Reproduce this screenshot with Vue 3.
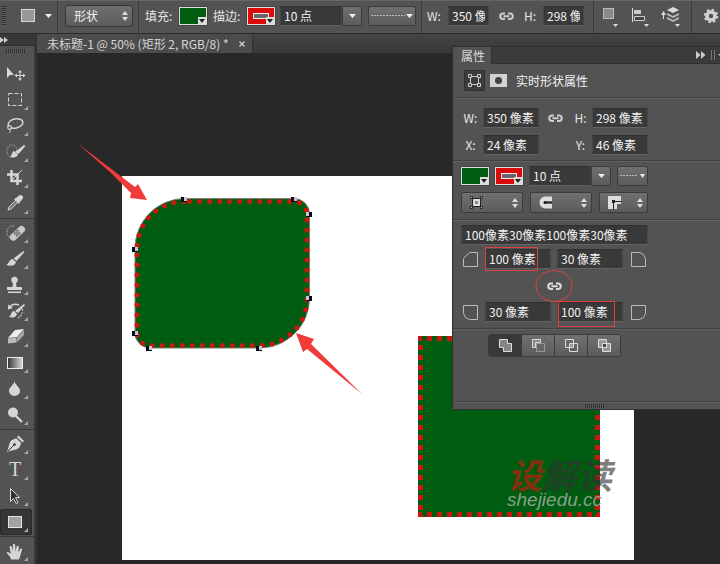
<script setup>
import { ref } from 'vue'

const light = '#d6d6d6'

const toolGroups = [
  [
    { name: '移动工具', plain: true, art: `<path d="M7 6v11l3-3 4 0z" fill="${light}"/><path d="M20 10v9M15.500 14.500h9" stroke="${light}" stroke-width="1"/><path d="M20 9l-2 2.500h4zM20 20l-2-2.500h4zM14.500 14.500l2.500-2v4zM25.500 14.500l-2.500-2v4z" fill="${light}"/>` },
    { name: '矩形选框工具', art: `<rect x="8.500" y="6.500" width="13" height="12" fill="none" stroke="${light}" stroke-dasharray="4 2"/>` },
    { name: '套索工具', art: `<ellipse cx="15.500" cy="10.500" rx="7.500" ry="4.500" transform="rotate(-12 15.500 10.500)" fill="none" stroke="${light}" stroke-width="1.500"/><circle cx="9.500" cy="14.500" r="1.800" fill="#535353" stroke="${light}" stroke-width="1.200"/><path d="M10 16c1 2 0 3-1 4" fill="none" stroke="${light}"/>` },
    { name: '快速选择工具', art: `<ellipse cx="12" cy="12" rx="5" ry="6" fill="none" stroke="${light}" stroke-dasharray="1 1.500"/><path d="M24 6l1.500 1-7 8-3.500-2z" fill="${light}"/><path d="M14 12l4 3.500c-1 3-4 3.500-8 2.500 2-1 1.500-5 4-6z" fill="${light}"/>` },
    { name: '裁剪工具', art: `<path d="M11.500 5v11H22M7 9.500h10.500V20" fill="none" stroke="${light}" stroke-width="2.500"/><path d="M12 15l10-10" stroke="${light}"/>` },
    { name: '吸管工具', art: `<path d="M16 9l-7 7-1 3 3-1 7-7z" fill="#777" stroke="${light}"/><path d="M14 8l2-1 3-2.500q2-1 3.500.5t0 3L20 11l-1 2z" fill="${light}"/>` },
  ],
  [
    { name: '污点修复画笔', art: `<path d="M14 6c-4-1-7 2-7 6s2 6 4 6" fill="none" stroke="${light}" stroke-dasharray="1 1.500"/><rect x="8" y="10" width="18" height="7" rx="3" transform="rotate(-43 17 13)" fill="#c9c9c9"/><rect x="14" y="10" width="6" height="6" transform="rotate(-43 17 13)" fill="#999"/><path d="M17 10.500v.1M17 13v.1M17 15.500v.1M14.500 13v.1M19.500 13v.1" stroke="#444" stroke-width="1.200" stroke-linecap="round"/>` },
    { name: '画笔工具', art: `<path d="M23.500 5l1 1-8 9-3-2.500z" fill="${light}"/><path d="M12.500 13l3.500 3c-1 4-5 4.500-10 3 3-1 3-5.500 6.500-6z" fill="${light}"/>` },
    { name: '仿制图章工具', art: `<circle cx="14.500" cy="8" r="3.200" fill="${light}"/><path d="M13 10h3l.5 5H22v3H7v-3h5.500zM8 19.500h13V21H8z" fill="${light}"/>` },
    { name: '历史记录画笔', art: `<path d="M24 6l1 1-7 8-3-2zM14 13l3 3c-1 3.500-4 4-8 3 2-1 2-5.500 5-6z" fill="${light}"/><path d="M10 9c2-3 6-3 9-2" fill="none" stroke="${light}" stroke-width="1.500"/><path d="M8 6.500v5l5-1.500z" fill="${light}"/><path d="M22.500 11c0 4-1 7-4.500 9" fill="none" stroke="${light}" stroke-width="1.200" stroke-dasharray="1.500 1.500"/>` },
    { name: '橡皮擦工具', art: `<path d="M15 6l9-1-7 8-9 1z" fill="#eee"/><path d="M8 14.500l8.500-1v5l-8.500 1z" fill="#bbb"/><path d="M17 13.500L24 6v5l-7 7.500z" fill="#a5a5a5"/>` },
    { name: '渐变工具', art: `<defs><linearGradient id="tg"><stop stop-color="#333"/><stop offset="1" stop-color="#ddd"/></linearGradient></defs><rect x="7.500" y="7.500" width="15" height="11" fill="url(#tg)" stroke="#eee"/>` },
    { name: '模糊工具', art: `<path d="M14.500 5c.5 4 5.500 6 5.500 10a5.500 5 0 0 1-11 0c0-4 5-6 5.500-10z" fill="${light}"/>` },
    { name: '减淡工具', art: `<circle cx="13" cy="10.500" r="5" fill="${light}"/><path d="M16 14l6 6" stroke="${light}" stroke-width="2.200"/>` },
  ],
  [
    { name: '钢笔工具', art: `<path d="M17 6l1.500-1.500 5.500 5.500-1.500 1.500z" fill="${light}"/><path d="M16.300 7.200l5 5L19 17c-4 2.500-8 2-12 4 2-4 1.500-8 4-11.500z" fill="${light}"/><path d="M8 20l6-6" stroke="#333"/><circle cx="14.500" cy="13.500" r="1.300" fill="#333"/>` },
    { name: '横排文字工具', art: `<text x="15" y="19" text-anchor="middle" font-family="Liberation Serif, serif" font-size="20" fill="${light}">T</text>` },
    { name: '路径选择工具', art: `<path d="M10.500 5.500v13l3-3 2.500 5 2-1-2.500-5h4z" fill="#333" stroke="${light}"/>` },
    { name: '矩形工具', active: true, art: `<rect x="8.500" y="7.500" width="13" height="11" fill="#a2a2a2" stroke="#e4e4e4"/>` },
  ],
  [
    { name: '抓手工具', art: `<path d="M11 21.500c-.5-3-2.500-4-4-6.200-.5-1.200.8-1.800 1.800-.9l2 1.600-1.200-7c0-1.300 2-1.500 2.300-.2l1 4.700V7c0-1.300 2.300-1.300 2.300 0l.3 6.500 1.200-5c.3-1.200 2.300-.9 2.200.3l-.6 5.700 2-3.600c.6-1 2.200-.4 1.800.8-1.400 4-1.800 7-3.200 9.800z" fill="${light}"/>` },
  ],
]

const fields = ref({
  width: '350 像素', height: '298 像素', x: '24 像素', y: '46 像素', stroke: '10 点',
  corners: '100像素30像素100像素30像素', tl: '100 像素', tr: '30 像素', bl: '30 像素', br: '100 像素',
})

const operations = [
  { name: '合并形状', art: '<path d="M.5.5h8v4h4v8h-8v-4h-4z" fill="#858585" stroke="#ddd"/>' },
  { name: '减去顶层形状', art: '<path d="M4.500 4.500h8v8h-8z" fill="#666" stroke="#999"/><path d="M.5.500h8v3h-5v5h-3z" fill="#888" stroke="#ddd"/>' },
  { name: '与形状区域相交', art: '<path d="M.5.500h8v8h-8zM4.500 4.500h8v8h-8z" fill="none" stroke="#ddd"/><path d="M5 5h3v3H5z" fill="#999"/>' },
  { name: '排除重叠形状', art: '<path d="M.5.500h8v8h-8zM4.500 4.500h8v8h-8z" fill="#999" stroke="#ddd"/><path d="M5 5h3v3H5z" fill="#444"/>' },
]
const activeOperation = ref(0)

const anchors = [[184, 199], [294, 199], [309, 214], [309, 298], [259, 348], [149, 348], [135, 333], [135, 249]]
</script>

<template>
  <div class="app">
    <header class="options">
      <div class="group preset">
        <i class="grip-v"></i>
        <button class="flat" aria-label="工具预设">
          <svg width="32" height="14"><rect x=".5" y=".5" width="13" height="12" fill="#989898" stroke="#d8d8d8" /><path d="M24 5h7l-3.500 4z" fill="#eee" /></svg>
        </button>
      </div>
      <div class="group mode">
        <div class="picker">
          <select aria-label="工具模式"><option>形状</option><option>路径</option><option>像素</option></select>
          <svg class="updown" width="6" height="10"><path d="M0 4l3-4 3 4zM0 6h6l-3 4z" fill="#ddd" /></svg>
        </div>
      </div>
      <div class="group paint">
        <label class="cap" for="bar-fill">填充:</label>
        <button id="bar-fill" class="swatch fill"><svg width="8" height="7"><path d="M0 0h8v7H0z" fill="#ddd" /><path d="M1 2h6L4 6z" fill="#222" /></svg></button>
        <label class="cap next" for="bar-stroke">描边:</label>
        <button id="bar-stroke" class="swatch stroke"><i></i><svg width="8" height="7"><path d="M0 0h8v7H0z" fill="#ddd" /><path d="M1 2h6L4 6z" fill="#222" /></svg></button>
        <div class="combo">
          <input v-model="fields.stroke" aria-label="描边宽度"><button aria-label="选择描边宽度"><svg width="7" height="4"><path d="M0 0h7L3.500 4z" fill="#eee" /></svg></button>
        </div>
        <button class="dash long" aria-label="描边类型"><svg width="42" height="6"><path d="M0 2.500h34" stroke="#bbb" stroke-width="1" stroke-dasharray="2 1" /><path d="M35 1h7l-3.500 4z" fill="#eee" /></svg></button>
      </div>
      <div class="group size">
        <label class="w" for="bar-w">W:</label><input id="bar-w" v-model="fields.width">
        <button class="flat chain" aria-label="链接宽高"><svg width="15" height="9"><path d="M6 7H4a2.700 2.700 0 0 1 0-5.500h2M9 7h2a2.700 2.700 0 0 0 0-5.500H9M4.500 4.200h6" fill="none" stroke="#ccc" stroke-width="2" /></svg></button>
        <label class="h" for="bar-h">H:</label><input id="bar-h" v-model="fields.height">
      </div>
      <div class="group arrange">
        <button class="flat" aria-label="路径操作"><svg width="24" height="20"><rect x="1.500" y="2.500" width="10" height="10" fill="#8a8a8a" stroke="#bbb" /><path d="M11 18h5l-2.500 3z" fill="#ddd" /></svg></button>
        <button class="flat" aria-label="路径对齐方式"><svg width="24" height="20"><path d="M1.500 2v14" stroke="#ddd" /><path d="M3 4h7v4H3z" fill="#ccc" /><path d="M3.500 10.500h10v4h-10z" fill="#444" stroke="#ccc" /><path d="M13 18h5l-2.500 3z" fill="#ddd" /></svg></button>
        <button class="flat" aria-label="路径排列方式"><svg width="24" height="20"><path d="M3.500 13V7" stroke="#ddd" /><path d="M1 9l2.500-4L6 9z" fill="#ddd" /><path d="M13 1l6 3-6 3-6-3z" fill="#ddd" /><path d="M7 7l6 3 6-3v2l-6 3-6-3zM7 11l6 3 6-3v2l-6 3-6-3z" fill="#bbb" /><path d="M15 18h5l-2.500 3z" fill="#ddd" /></svg></button>
      </div>
      <div class="group more">
        <button class="flat" aria-label="设置"><svg width="16" height="16" viewBox="-8 -8 16 16"><circle r="4" fill="none" stroke="#d2d2d2" stroke-width="3.500" /><circle r="6" fill="none" stroke="#d2d2d2" stroke-width="2.500" stroke-dasharray="2.350 2.350" /></svg></button>
      </div>
    </header>

    <div class="workspace">
      <nav class="toolbox" aria-label="工具">
        <button class="collapse" aria-label="展开面板"><svg width="8" height="6"><path d="M0 0l4 3-4 3zM4 0l4 3-4 3z" fill="#ccc" /></svg></button>
        <div class="handle"><i class="grip-h"></i></div>
        <div v-for="(group, g) in toolGroups" :key="g" class="tool-group">
          <button v-for="tool in group" :key="tool.name" class="tool" :class="{ active: tool.active }" :aria-label="tool.name">
            <svg width="32" height="26"><g v-html="tool.art" /><path v-if="!tool.plain" d="M28 19v4h-4z" fill="#aaa" /></svg>
          </button>
        </div>
      </nav>

      <main class="document">
        <div class="tabs">
          <div class="tab"><span>未标题-1 @ 50% (矩形 2, RGB/8) *</span><button class="flat" aria-label="关闭"><svg width="6" height="6"><path d="M.5.500l5 5M5.500.500l-5 5" stroke="#ccc" stroke-width="1.300" /></svg></button></div>
        </div>
        <div class="canvas">
          <svg class="scene" width="600" height="510" viewBox="37 54 600 510">
            <rect x="122" y="176" width="512" height="384" fill="#fff" />
            <rect x="418" y="336" width="182" height="181" fill="#005c10" />
            <path d="M420.500 339v178M597.500 339v178" stroke="#cb1710" stroke-width="5" stroke-dasharray="5 5" stroke-dashoffset="4" />
            <path d="M418 514.500h182M418 338.500h182" stroke="#cb1710" stroke-width="5" stroke-dasharray="5 5" stroke-dashoffset="1" />
            <path d="M185 198.500h109a15.500 15.500 0 0 1 15.500 15.500v84a50 50 0 0 1-50 50H150a15 15 0 0 1-15-15V248.500a50 50 0 0 1 50-50z" fill="#005c10" stroke="#79877a" />
            <path d="M189.700 201.500H294a13 13 0 0 1 13 13V298a47 47 0 0 1-47 47.500H150a13 13 0 0 1-13-13V249a47.500 47.500 0 0 1 48-47.500z" fill="none" stroke="#cb1710" stroke-width="5" stroke-linecap="round" stroke-dasharray="0 10" />
            <g v-for="([x, y], i) in anchors" :key="i">
              <rect :x="x - 3" :y="y - 2" width="6" height="5" fill="#080810" />
              <rect :x="x > 300 ? x - 3 : x" :y="y - 2" width="3" height="4" fill="#cfc3dc" />
            </g>
            <path d="M77 143L135 187l3-3 9 16-17-2 1-5-21-21z" fill="#f03b3b" />
            <path d="M296 333l18 6-3 5 51 50-55-45-4 3z" fill="#f03b3b" />
            <g class="watermark">
              <text x="507" y="489" class="mark"><tspan fill="#a5270e" fill-opacity=".8">设</tspan><tspan fill="#333" fill-opacity=".65">解读</tspan></text>
              <text x="507" y="506" class="site">shejiedu.cc</text>
            </g>
          </svg>
        </div>
      </main>

      <aside class="panel">
        <div class="panel-head"><h2>属性</h2><button class="flat" aria-label="折叠面板"><svg width="24" height="10"><path d="M0 1l4.500 4L0 9zM5 1l4.500 4L5 9z" fill="#ccc" /><path d="M15.500 0v10M18.500 0v10" stroke="#777" /><path d="M22 4h2v2z" fill="#bbb" /></svg></button></div>
        <div class="title">
          <button class="kind" aria-label="形状属性"><svg width="13" height="13"><path d="M2.500 2.500h8v8h-8z" fill="none" stroke="#ccc" /><path d="M.5.500h3v3h-3zM9.500.500h3v3h-3zM.5 9.500h3v3h-3zM9.500 9.500h3v3h-3z" fill="#444" stroke="#ccc" /></svg></button>
          <button class="flat" aria-label="蒙版"><svg width="17" height="13"><path d="M0 0h17v13H0z" fill="#d2d2d2" /><circle cx="8.500" cy="6.500" r="3.500" fill="#444" /></svg></button>
          <span>实时形状属性</span>
        </div>
        <section class="geometry">
          <label for="p-w">W:</label><input id="p-w" v-model="fields.width">
          <button class="flat" aria-label="链接宽高"><svg width="15" height="9"><path d="M6 7H4a2.700 2.700 0 0 1 0-5.500h2M9 7h2a2.700 2.700 0 0 0 0-5.500H9M4.500 4.200h6" fill="none" stroke="#ccc" stroke-width="2" /></svg></button>
          <label for="p-h">H:</label><input id="p-h" v-model="fields.height">
          <label for="p-x">X:</label><input id="p-x" v-model="fields.x">
          <span></span>
          <label for="p-y">Y:</label><input id="p-y" v-model="fields.y">
        </section>
        <section class="appearance">
          <div class="line">
            <button class="swatch fill" aria-label="填充颜色"><svg width="8" height="7"><path d="M0 0h8v7H0z" fill="#ddd" /><path d="M1 2h6L4 6z" fill="#222" /></svg></button>
            <button class="swatch stroke" aria-label="描边颜色"><i></i><svg width="8" height="7"><path d="M0 0h8v7H0z" fill="#ddd" /><path d="M1 2h6L4 6z" fill="#222" /></svg></button>
            <div class="combo"><input v-model="fields.stroke" aria-label="描边宽度"><button aria-label="选择描边宽度"><svg width="7" height="4"><path d="M0 0h7L3.500 4z" fill="#eee" /></svg></button></div>
            <button class="dash" aria-label="描边类型"><svg width="25" height="6"><path d="M0 2.500h18" stroke="#bbb" stroke-width="1" stroke-dasharray="2 1" /><path d="M20 1h5l-2.500 4z" fill="#eee" /></svg></button>
          </div>
          <div class="line strokes">
            <button class="choice" aria-label="描边对齐"><svg width="13" height="13"><path d="M2.500 2.500h8v8h-8z" fill="#ddd" stroke="#222" /><path d="M5 5h3v3H5z" fill="#888" /><path d="M.5.500h2v2h-2zM10.500.500h2v2h-2zM.5 10.500h2v2h-2zM10.500 10.500h2v2h-2z" fill="#ddd" stroke="#222" /></svg><svg width="6" height="10"><path d="M0 4l3-4 3 4zM0 6h6l-3 4z" fill="#ddd" /></svg></button>
            <button class="choice" aria-label="描边端点"><svg width="13" height="13"><path d="M13 .500H6.500a6 6 0 0 0 0 12H13V8H5V5h8z" fill="#ddd" /><path d="M6 6.500h7" stroke="#222" /><circle cx="6" cy="6.500" r="1.500" fill="#222" /></svg><svg width="6" height="10"><path d="M0 4l3-4 3 4zM0 6h6l-3 4z" fill="#ddd" /></svg></button>
            <button class="choice" aria-label="描边角点"><svg width="13" height="13"><path d="M0 0h13v8H9v5H0z" fill="#ddd" /><path d="M5.500 13V5.500H13" fill="none" stroke="#222" /><path d="M4 4h3v3H4z" fill="#222" /></svg><svg width="6" height="10"><path d="M0 4l3-4 3 4zM0 6h6l-3 4z" fill="#ddd" /></svg></button>
          </div>
        </section>
        <section class="radii">
          <input v-model="fields.corners" class="all" aria-label="圆角半径">
          <label for="r-tl"><svg width="15" height="15"><path d="M.5 14.500v-8l6-6h8v14z" fill="none" stroke="#bbb" /></svg></label>
          <input id="r-tl" v-model="fields.tl"><input id="r-tr" v-model="fields.tr" class="second">
          <label class="after" for="r-tr"><svg width="15" height="15"><path d="M.5.500h8q5 1 6 6v8H.5z" fill="none" stroke="#bbb" /></svg></label>
          <button class="flat link" aria-label="链接圆角"><svg width="15" height="9"><path d="M6 7H4a2.700 2.700 0 0 1 0-5.500h2M9 7h2a2.700 2.700 0 0 0 0-5.500H9M4.500 4.200h6" fill="none" stroke="#ddd" stroke-width="2" /></svg></button>
          <label for="r-bl"><svg width="15" height="15"><path d="M.5.500h14v14h-8q-5-1-6-6z" fill="none" stroke="#bbb" /></svg></label>
          <input id="r-bl" v-model="fields.bl"><input id="r-br" v-model="fields.br" class="second">
          <label class="after" for="r-br"><svg width="15" height="15"><path d="M.5.500h14v8q-1 5-6 6h-8z" fill="none" stroke="#bbb" /></svg></label>
        </section>
        <section class="ops">
          <div class="segments">
            <button v-for="(op, i) in operations" :key="op.name" :class="{ on: i === activeOperation }" :aria-label="op.name" @click="activeOperation = i"><svg width="13" height="13" v-html="op.art" /></button>
          </div>
        </section>
        <footer><i class="grip-h"></i></footer>
        <svg class="notes" width="267" height="362" viewBox="453 47 267 362" fill="none" stroke="#dc4242">
          <rect x="485.500" y="247.500" width="52" height="23" /><rect x="558.500" y="301.500" width="56" height="25" /><ellipse cx="554" cy="286" rx="18" ry="15.500" />
        </svg>
      </aside>
    </div>
  </div>
</template>

<style>
body { margin: 0; background: #282828; }
</style>

<style scoped>
* { box-sizing: border-box; }
svg { display: block; flex: none; }
.app { display: flex; flex-direction: column; min-height: 100vh; overflow: hidden; color: #e6e6e6; font: 12px/16px "Noto Sans CJK SC", sans-serif; }
button, input, select { margin: 0; padding: 0; border: 0; font: inherit; color: inherit; }
button { display: flex; align-items: center; justify-content: center; flex: none; }
input { min-width: 0; height: 20px; padding: 0 3px 2px; background: #393939; border: 1px solid #474747; border-top-color: #303030; border-bottom-color: #626262; color: #f2f2f2; border-radius: 0; }
.flat { background: none; }

.options { display: flex; height: 34px; background: #535353; border-top: 1px solid #666; border-bottom: 1px solid #2c2c2c; overflow: hidden; }
.group { display: flex; flex: none; align-items: center; padding-bottom: 2px; border-right: 1px solid #3b3b3b; }
.grip-v { width: 5px; height: 20px; background: repeating-linear-gradient(#303030 0 1px, #606060 1px 2px); }
.preset { gap: 15px; padding-left: 1px; width: 58px; }
.mode { padding-left: 7px; padding-right: 5px; }
.picker { display: grid; align-items: center; width: 68px; }
.picker select, .updown { grid-area: 1 / 1; }
.picker select { appearance: none; height: 22px; padding-left: 8px; border: 1px solid #363636; border-radius: 3px; background: linear-gradient(#6f6f6f, #5c5c5c); color: #f2f2f2; }
.updown { justify-self: end; margin-right: 5px; pointer-events: none; }
.paint { padding-left: 6px; padding-right: 5px; }
.cap { width: 34px; white-space: nowrap; }
.cap.next { margin-left: 6px; }
.swatch { position: relative; width: 28px; height: 18px; border: 1px solid #ddd; outline: 1px solid #444; outline-offset: 0; }
.swatch svg { position: absolute; right: 0; bottom: 0; }
.fill { background: #005c10; }
.stroke { background: #dc0b0b; }
.stroke i { width: 16px; height: 6px; border: 1px solid #eee; background: #666; }
.combo { display: flex; width: 82px; }
.combo input { flex: 1; height: 20px; }
.combo button { width: 20px; height: 20px; border: 1px solid #3b3b3b; border-radius: 0 2px 2px 0; background: linear-gradient(#707070, #5c5c5c); }
.paint .combo { margin-left: 5px; margin-right: 6px; }
.dash { width: 31px; height: 20px; border: 1px solid #3b3b3b; border-radius: 2px; background: linear-gradient(#707070, #5c5c5c); }
.dash.long { width: 48px; }
.size { padding-left: 5px; padding-right: 9px; }
.size input { width: 41px; }
.size .w { width: 21px; }
.size .h { width: 19px; }
.chain { margin: 0 10px; }
.arrange { gap: 5px; padding-left: 8px; padding-right: 7px; }
.arrange svg { overflow: visible; }
.more { padding-left: 11px; border: 0; }

.workspace { position: relative; display: flex; flex: 1; }
.toolbox { flex: none; width: 35px; background: #535353; border-right: 1px solid #3a3a3a; }
.collapse { justify-content: flex-start; width: 100%; height: 12px; background: #383838; border-bottom: 1px solid #2e2e2e; }
.handle { display: flex; justify-content: center; height: 15px; padding: 3px 3px 0 0; }
.grip-h { width: 20px; height: 4px; background: repeating-linear-gradient(90deg, #2e2e2e 0 1px, #5c5c5c 1px 2px); }
.tool-group + .tool-group { margin-top: 1px; padding-top: 1px; border-top: 1px solid #383838; }
.tool { width: 32px; height: 26px; background: none; border-radius: 3px; }
.tool.active { background: #363636; box-shadow: inset 0 0 0 1px #292929; }

.document { display: flex; flex: 1; flex-direction: column; min-width: 0; padding-left: 2px; background: #333; }
.tabs { display: flex; height: 20px; background: linear-gradient(#444, #383838); border-bottom: 1px solid #292929; }
.tab { display: flex; align-items: center; gap: 10px; padding: 0 7px 0 10px; background: #4c4c4c; border-right: 1px solid #303030; color: #d5d5d5; white-space: nowrap; }
.canvas { position: relative; flex: 1; min-height: 510px; background: #282828; overflow: hidden; }
.scene { position: absolute; left: 0; top: 0; }
.watermark { font-style: italic; font-family: "Noto Sans CJK SC", sans-serif; }
.mark { font-size: 35px; font-weight: 700; }
.site { font-family: "Liberation Sans", sans-serif; font-size: 19px; fill: #a0aea0; fill-opacity: .85; }

.panel { position: absolute; top: 13px; right: 0; width: 267px; background: #535353; box-shadow: 0 0 0 1px #303030; }
.panel-head { display: flex; align-items: center; justify-content: space-between; height: 17px; background: #3b3b3b; border-bottom: 1px solid #303030; }
.panel-head h2 { margin: 0; padding: 0 6px 0 8px; background: #535353; border-right: 1px solid #303030; font: inherit; line-height: 17px; color: #ddd; }
.title { display: flex; align-items: center; gap: 5px; height: 34px; padding-left: 11px; border-bottom: 1px solid #404040; box-shadow: 0 1px #606060; }
.title .kind { width: 21px; height: 21px; background: #3c3c3c; border: 1px solid #303030; }
.title span { padding-left: 4px; color: #f2f2f2; }
section { border-bottom: 1px solid #404040; box-shadow: 0 1px #606060; }
.geometry { display: grid; grid-template-columns: 22px 56px 33px 20px 56px; grid-auto-rows: 20px; row-gap: 7px; align-items: center; padding: 10px 0 5px 8px; }
.geometry label { padding-right: 3px; text-align: center; }
.appearance { display: flex; flex-direction: column; gap: 6px; padding: 5px 0 6px 8px; }
.line { display: flex; align-items: center; }
.line .swatch + .swatch { margin: 0 6px; }
.line .dash { margin-left: 6px; }
.strokes { gap: 7px; }
.choice { justify-content: space-between; width: 62px; height: 21px; padding: 0 4px 0 8px; border: 1px solid #3b3b3b; border-radius: 2px; background: linear-gradient(#707070, #5c5c5c); }
.choice:last-child { width: 49px; }
.radii { display: grid; grid-template-columns: 24px 66px 72px 25px; grid-template-rows: 20px 28px 27px 24px; align-items: center; padding: 5px 0 4px 8px; }
.radii .all, .radii .link { grid-column: 1 / -1; }
.radii .second { margin-left: 6px; }
.radii label { padding-left: 2px; }
.radii .after { padding-left: 8px; }
.ops { height: 73px; padding: 5px 0 0 35px; }
.segments { display: flex; width: 133px; border: 1px solid #3b3b3b; border-radius: 3px; overflow: hidden; }
.segments button { flex: 1; height: 21px; background: linear-gradient(#707070, #5c5c5c); }
.segments button + button { border-left: 1px solid #3b3b3b; }
.segments .on { background: #393939; }
footer { display: flex; justify-content: center; height: 7px; padding-top: 2px; padding-left: 16px; }
.notes { position: absolute; left: 0; top: 0; pointer-events: none; }
</style>
